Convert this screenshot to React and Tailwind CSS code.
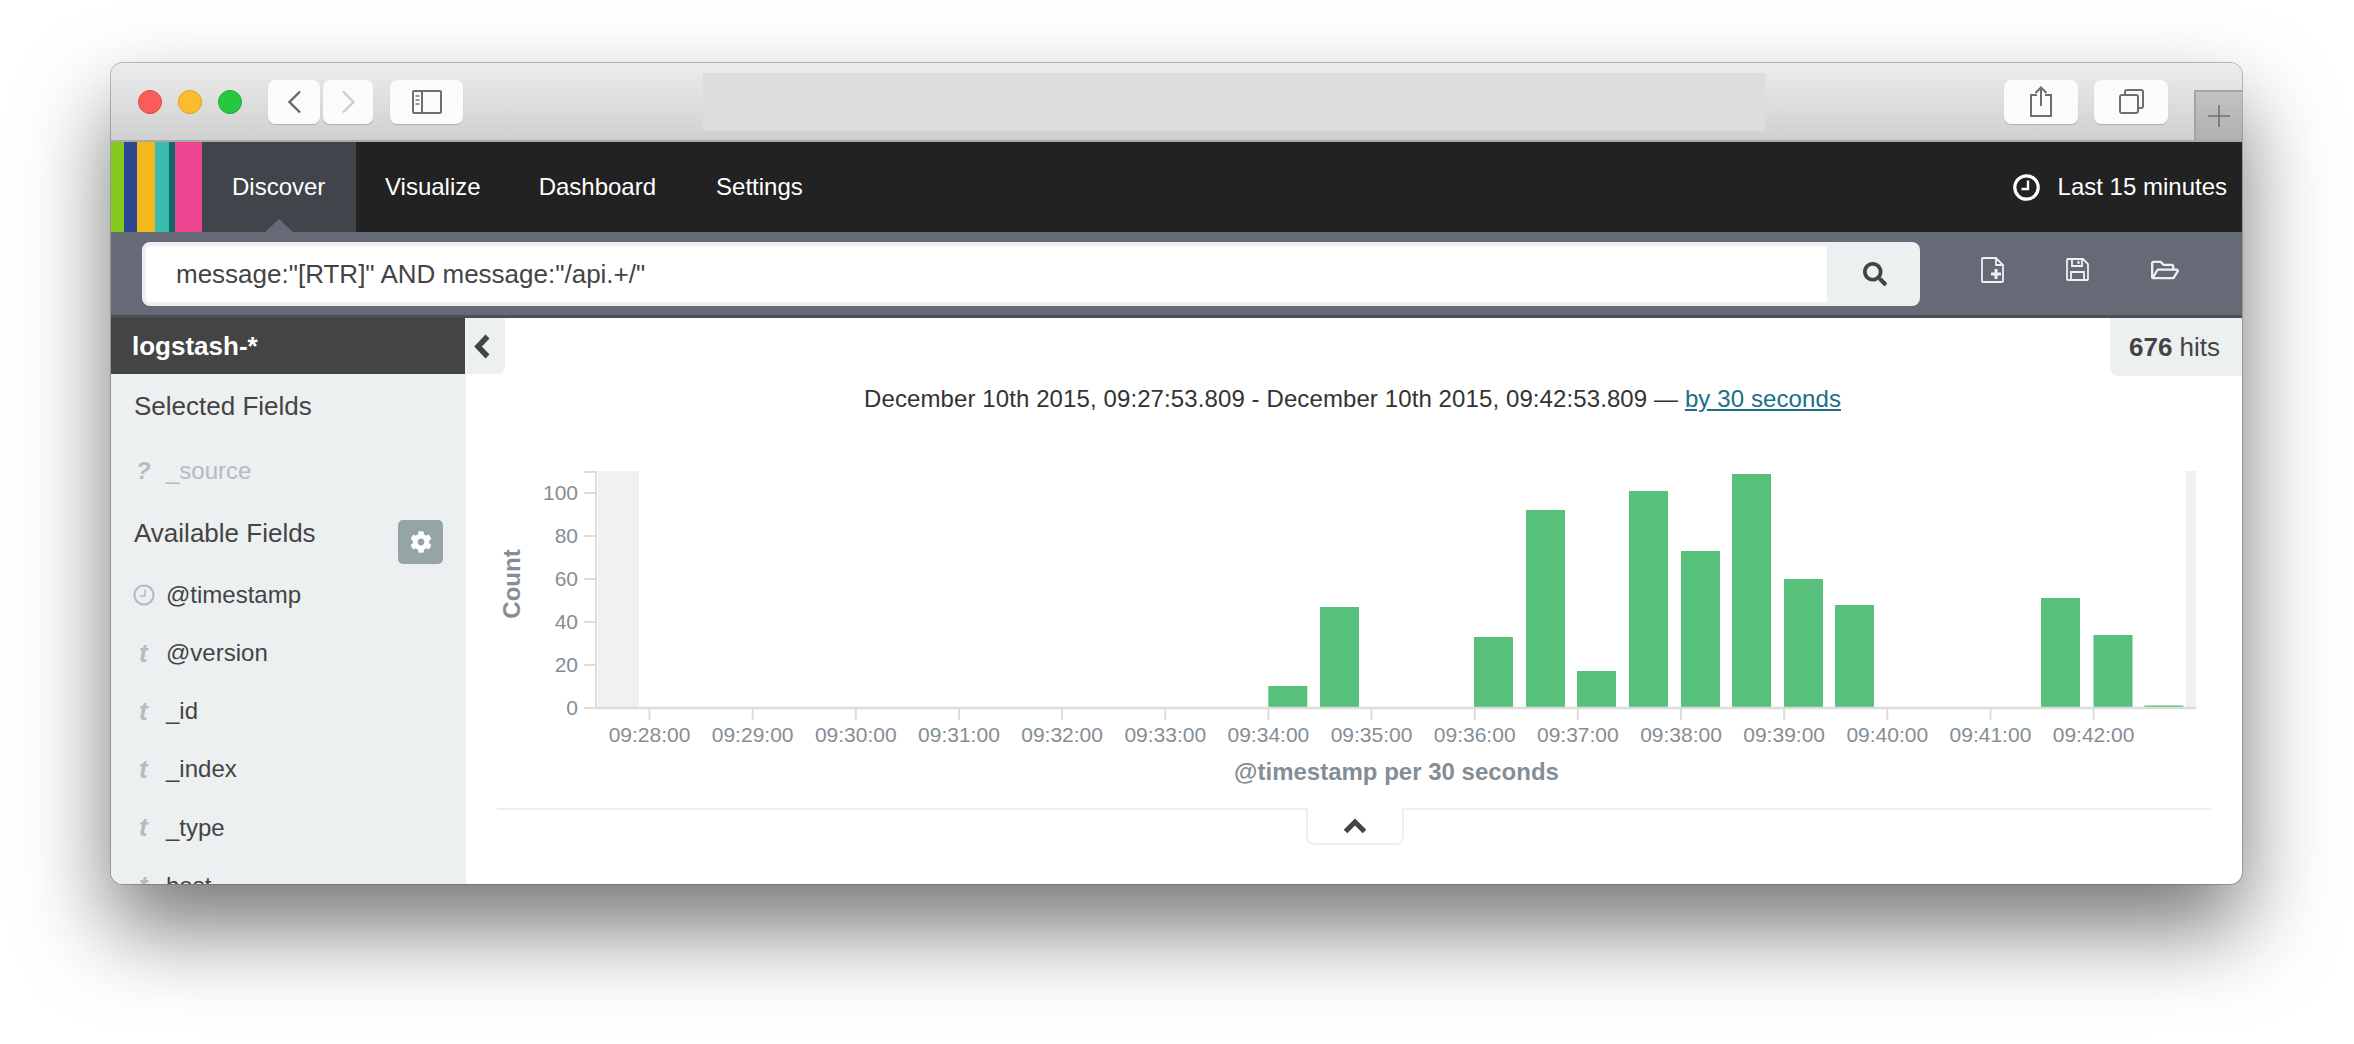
import React from "react";
import { FaSearch, FaCog, FaRegFolderOpen } from "react-icons/fa";

const stripes = [
  "w-[13px] bg-[#84c91c]",
  "w-[12.5px] bg-[#2f4690]",
  "w-[18px] bg-[#f2b81c]",
  "w-[14px] bg-[#3abcb1]",
  "w-[6.5px] bg-[#0d6a68]",
  "w-[27px] bg-[#ec4790]",
];

const fields = ["@version", "_id", "_index", "_type", "host"];
const yTicks = [100, 80, 60, 40, 20, 0];
const xLabels = ["09:28:00","09:29:00","09:30:00","09:31:00","09:32:00","09:33:00","09:34:00","09:35:00","09:36:00","09:37:00","09:38:00","09:39:00","09:40:00","09:41:00","09:42:00"];
const bars = [
  [1268.3, 686], [1320, 607], [1474, 637], [1526, 510], [1577, 671], [1629, 491], [1681, 551],
  [1732, 474], [1784, 579], [1835, 605], [2041, 598], [2093.5, 635], [2144.4, 705.5],
];

function TopButton({ className, children }) {
  return (
    <div className={"h-[44px] rounded-[7px] bg-[#fbfbfb] shadow-[0_1px_1px_rgba(0,0,0,0.18)] flex items-center justify-center shrink-0 " + className}>
      {children}
    </div>
  );
}

function Chart() {
  const axis = "#dcdcdc";
  const label = "#848e96";
  return (
    <svg className="block shrink-0" width="1776" height="384" viewBox="466 424 1776 384" fontFamily="'Liberation Sans', Arial, sans-serif">
      <rect x="598" y="471" width="41" height="236" fill="#f1f1f1" />
      <rect x="2186" y="471" width="10" height="236" fill="#f1f1f1" />
      {bars.map(([x, y]) => (
        <rect key={x} x={x} y={y} width="39" height={707 - y} fill="#57c17b" />
      ))}
      <path d="M584 472H596V708" fill="none" stroke={axis} strokeWidth="2" />
      <path d="M596 708H2196" stroke={axis} strokeWidth="2.5" />
      {yTicks.map((v, i) => {
        const y = 493 + i * 43;
        return (
          <g key={v}>
            <line x1="584" x2="596" y1={y} y2={y} stroke={axis} strokeWidth="2" />
            <text x="578" y={y + 6.5} textAnchor="end" fontSize="21" fill={label}>{v}</text>
          </g>
        );
      })}
      {xLabels.map((t, i) => {
        const x = 649.5 + i * 103.15;
        return (
          <g key={t}>
            <line x1={x} x2={x} y1="708" y2="720" stroke={axis} strokeWidth="2" />
            <text x={x} y="742" textAnchor="middle" fontSize="21" fill={label}>{t}</text>
          </g>
        );
      })}
      <text transform="translate(520 584) rotate(-90)" textAnchor="middle" fontSize="24" fontWeight="700" fill={label}>Count</text>
      <text x="1396.5" y="779.5" textAnchor="middle" fontSize="24" fontWeight="700" fill={label}>@timestamp per 30 seconds</text>
    </svg>
  );
}

export default function App() {
  return (
    <div className="w-[2354px] h-[1044px] overflow-hidden bg-white pt-[63px] pl-[111px] font-['Liberation_Sans',Arial,sans-serif] text-[24px] text-[#444444]">
      <div className="w-[2131px] h-[821px] rounded-[12px] overflow-hidden flex flex-col bg-white shadow-[0_0_0_1px_rgba(90,90,90,0.4),0_44px_88px_rgba(0,0,0,0.54)]">
        {/* browser title bar */}
        <div className="h-[79px] shrink-0 flex items-center bg-gradient-to-b from-[#ececec] to-[#d0d0d0] border-b-2 border-[#a9a9a9]">
          <div className="flex gap-[16px] ml-[27px]">
            <div className="w-[24px] h-[24px] rounded-full bg-[#fc5c57] border border-[#e2463f]" />
            <div className="w-[24px] h-[24px] rounded-full bg-[#fdbc2e] border border-[#dfa023]" />
            <div className="w-[24px] h-[24px] rounded-full bg-[#26c840] border border-[#1dad2b]" />
          </div>
          <TopButton className="ml-[26px] w-[52px]">
            <svg width="15" height="24" viewBox="0 0 15 24" fill="none" stroke="#666" strokeWidth="2.4"><path d="M13 1.5 2.5 12 13 22.5" /></svg>
          </TopButton>
          <TopButton className="ml-[3px] w-[50px]">
            <svg width="15" height="24" viewBox="0 0 15 24" fill="none" stroke="#ccc" strokeWidth="2.4"><path d="M2 1.5 12.5 12 2 22.5" /></svg>
          </TopButton>
          <TopButton className="ml-[17px] w-[73px]">
            <svg width="30" height="24" viewBox="0 0 30 24" fill="none" stroke="#6e6e6e" strokeWidth="2">
              <rect x="1" y="1" width="28" height="22" rx="1" />
              <path d="M10 1v22" />
              <path d="M3.5 6h4M3.5 10h4M3.5 14h4" strokeWidth="2" stroke="#999" />
            </svg>
          </TopButton>
          <div className="ml-[240px] w-[1062px] h-[58px] bg-[#dddddd] shrink-0" />
          <TopButton className="ml-[239px] w-[74px]">
            <svg width="24" height="32" viewBox="0 0 24 32" fill="none" stroke="#6e6e6e" strokeWidth="2">
              <path d="M8 9H2v21h20V9h-6" />
              <path d="M12 20V2M6.5 7 12 1.5 17.5 7" />
            </svg>
          </TopButton>
          <TopButton className="ml-[16px] w-[74px]">
            <svg width="25" height="25" viewBox="0 0 25 25" fill="none" stroke="#6e6e6e" strokeWidth="2">
              <rect x="1" y="6" width="18" height="18" rx="2" />
              <path d="M6 6V3a2 2 0 0 1 2-2h14a2 2 0 0 1 2 2v14a2 2 0 0 1-2 2h-3" />
            </svg>
          </TopButton>
          <div className="ml-[26px] w-[48px] h-[50px] self-end bg-gradient-to-b from-[#c2c2c2] to-[#b0b0b0] border-l-[2px] border-t-[2px] border-[#a3a3a3] flex items-center justify-center">
            <svg width="24" height="24" viewBox="0 0 24 24" stroke="#707070" strokeWidth="1.6"><path d="M12 1v22M1 12h22" /></svg>
          </div>
        </div>

        {/* kibana nav */}
        <div className="h-[90px] shrink-0 bg-[#222222] flex text-white">
          <div className="flex shrink-0">
            {stripes.map((s) => (
              <div key={s} className={s} />
            ))}
          </div>
          <div className="relative w-[154px] shrink-0 bg-[#41444b] pl-[30px] flex items-center">
            Discover
            <div className="absolute bottom-0 left-[63px] w-0 h-0 border-x-[14px] border-x-transparent border-b-[13px] border-b-[#656a76]" />
          </div>
          <div className="px-[29px] flex items-center">Visualize</div>
          <div className="px-[29px] flex items-center">Dashboard</div>
          <div className="ml-[2px] px-[29px] flex items-center">Settings</div>
          <div className="ml-auto pr-[15px] flex items-center gap-[18px]">
            <svg width="27" height="27" viewBox="0 0 27 27" fill="none" stroke="#fff">
              <circle cx="13.5" cy="13.5" r="11.7" strokeWidth="3.2" />
              <path d="M15 6.5v8.5H8.5" strokeWidth="2.4" />
            </svg>
            Last 15 minutes
          </div>
        </div>

        {/* query bar */}
        <div className="h-[86px] shrink-0 bg-[#656a76] border-b-[3px] border-[#4a4e58] flex items-start pt-[10px] pl-[31px]">
          <div className="w-[1778px] h-[64px] shrink-0 rounded-[8px] border-[4px] border-[#ecf0f1] bg-white flex items-center">
            <div className="flex-1 pl-[30px] text-[26px]">message:"[RTR]" AND message:"/api.+/"</div>
            <div className="w-[89px] self-stretch bg-[#ecf0f1] flex items-center justify-center pl-[6px]">
              <FaSearch size={24} color="#444444" />
            </div>
          </div>
          <div className="ml-[61px] mt-[15px]">
            <svg width="23" height="26" viewBox="0 0 23 26" fill="none" stroke="#ecf0f1" strokeWidth="1.8">
              <path d="M1 2a1 1 0 0 1 1-1h13l7 7v16a1 1 0 0 1-1 1H2a1 1 0 0 1-1-1z" />
              <path d="M15 1v7h7" />
              <path d="M10 17h10M15 12v10" strokeWidth="3" />
            </svg>
          </div>
          <div className="ml-[62px] mt-[16px]">
            <svg width="23" height="23" viewBox="0 0 23 23" fill="none" stroke="#ecf0f1" strokeWidth="1.8">
              <path d="M1 2a1 1 0 0 1 1-1h15l5 5v15a1 1 0 0 1-1 1H2a1 1 0 0 1-1-1z" />
              <path d="M6 1v7h10V1" />
              <path d="M12.5 3v3" strokeWidth="2" />
              <path d="M5 22v-8h13v8" />
            </svg>
          </div>
          <div className="ml-[62px] mt-[14px]"><FaRegFolderOpen size={28} color="#ecf0f1" /></div>
        </div>

        {/* body */}
        <div className="flex-1 min-h-0 flex">
          <div className="w-[355px] shrink-0 bg-[#ecf0f1] overflow-hidden">
            <div className="h-[56px] bg-[#444444] text-white font-bold text-[26px] pl-[21px] flex items-center">logstash-*</div>
            <div className="h-[65px] mb-[3px] pl-[23px] text-[26px] flex items-center">Selected Fields</div>
            <div className="h-[58px] flex items-center text-[#b4bcc2]">
              <span className="w-[55px] pl-[25px] font-bold italic">?</span>
              <span>_source</span>
            </div>
            <div className="h-[66px] flex items-start justify-between pl-[23px] pr-[23px]">
              <span className="text-[26px] leading-[66px]">Available Fields</span>
              <div className="mt-[20px] w-[45px] h-[44px] rounded-[5px] bg-[#95a5a6] flex items-center justify-center">
                <FaCog size={22} color="#ffffff" />
              </div>
            </div>
            <div className="h-[58px] flex items-center">
              <span className="w-[55px] pl-[22px]">
                <svg width="22" height="22" viewBox="0 0 22 22" fill="none" stroke="#b4bcc2">
                  <circle cx="11" cy="11" r="9.5" strokeWidth="2.2" />
                  <path d="M12 5.5V12H7" strokeWidth="1.5" />
                </svg>
              </span>
              <span>@timestamp</span>
            </div>
            {fields.map((f) => (
              <div key={f} className="h-[58.2px] flex items-center">
                <span className="w-[55px] pl-[28px] font-bold italic text-[26px] text-[#b4bcc2]">t</span>
                <span>{f}</span>
              </div>
            ))}
          </div>

          <div className="flex-1 min-w-0 flex flex-col">
            <div className="h-[56px] shrink-0 flex justify-between items-start">
              <div className="w-[40px] h-[56px] bg-[#ecf0f1] rounded-br-[8px] flex items-center justify-center -ml-[1px] pr-[6px]">
                <svg width="18" height="25" viewBox="0 0 18 25" fill="none" stroke="#444444" strokeWidth="5.5"><path d="M14.5 2.5 5 12.5l9.5 10" /></svg>
              </div>
              <div className="w-[132px] h-[58px] bg-[#ecf0f1] rounded-bl-[8px] flex items-center pl-[19px] relative z-10 text-[26px]">
                <b>676</b>&nbsp;hits
              </div>
            </div>
            <div className="h-[50px] shrink-0 flex items-center justify-center pr-[3px] text-[#333333] tracking-[0.1px]">
              <span className="whitespace-pre">December 10th 2015, 09:27:53.809 - December 10th 2015, 09:42:53.809 — </span>
              <span className="underline text-[#1a6f86]">by 30 seconds</span>
            </div>
            <Chart />
            <div className="ml-[31px] w-[1714px] h-[2px] bg-[#ecf0f1] shrink-0" />
            <div className="ml-[840px] -mt-[2px] w-[98px] h-[37px] shrink-0 bg-white border-x-2 border-b-2 border-[#ecf0f1] rounded-b-[8px] flex items-center justify-center">
              <svg width="24" height="16" viewBox="0 0 24 16" fill="none" stroke="#444444" strokeWidth="5"><path d="M2.5 13.5 12 4l9.5 9.5" /></svg>
            </div>
          </div>
        </div>
      </div>
    </div>
  );
}
